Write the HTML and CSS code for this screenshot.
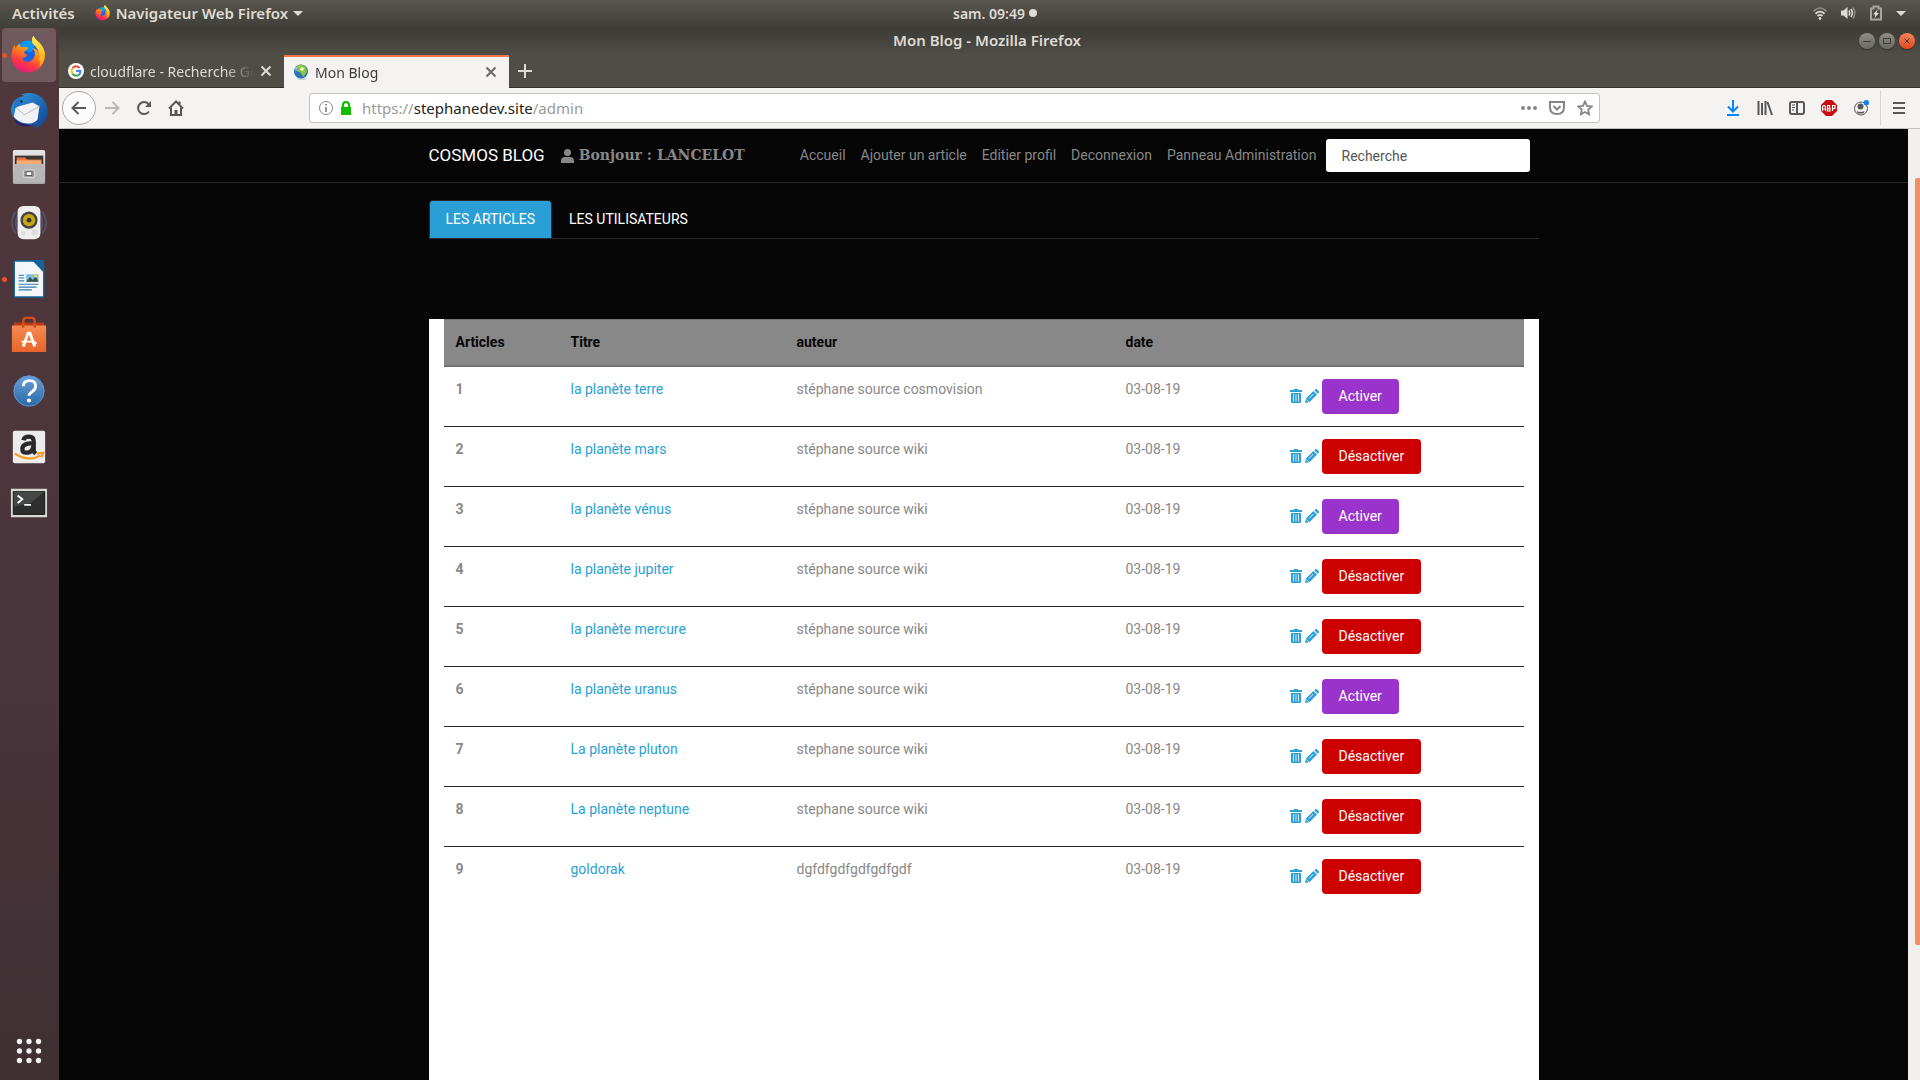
FILE: index.html
```html
<!DOCTYPE html>
<html lang="fr">
<head>
<meta charset="utf-8">
<title>Mon Blog</title>
<link rel="stylesheet" href="styles.css">
</head>
<body>
<svg class="sprite" aria-hidden="true">
  <defs>
    <linearGradient id="ff-body" x1="0.7" y1="0" x2="0.3" y2="1"><stop offset="0" stop-color="#ffd93a"/><stop offset="0.45" stop-color="#ff8a16"/><stop offset="0.75" stop-color="#ff3647"/><stop offset="1" stop-color="#e31587"/></linearGradient>
    <linearGradient id="ff-flame" x1="0" y1="0" x2="0" y2="1"><stop offset="0" stop-color="#fff14f"/><stop offset="1" stop-color="#ff980e"/></linearGradient>
    <linearGradient id="metal" x1="0" y1="0" x2="0" y2="1"><stop offset="0" stop-color="#e8e8e8"/><stop offset="1" stop-color="#a9a9a9"/></linearGradient>
    <linearGradient id="orange" x1="0" y1="0" x2="0" y2="1"><stop offset="0" stop-color="#f58a52"/><stop offset="1" stop-color="#e8652a"/></linearGradient>
    <linearGradient id="blue" x1="0" y1="0" x2="0" y2="1"><stop offset="0" stop-color="#6a9fd8"/><stop offset="1" stop-color="#2a6aa8"/></linearGradient>
    <linearGradient id="bird" x1="0" y1="0" x2="1" y2="1"><stop offset="0" stop-color="#2f9be6"/><stop offset="1" stop-color="#123f8c"/></linearGradient>
  </defs>
  <symbol id="firefox" viewBox="0 0 40 40">
    <circle cx="19" cy="19" r="14" fill="#1b63dc"/>
    <path d="M10 9c5-6 13-5 17-1l-5 9-9-2z" fill="#0a9bf0"/>
    <path d="M5 9c0 2 .4 3 1 4 1-3 3-4 4-5 0 2 1 3 2 4 3-1 6 0 7 0-.5 3-4 3-4 5 0 2 1 2 3 3-1 3-4 2-5 4 2 5 11 4 13-3 1-4-1-7-3-8 4 0 6 2 7 5 0-6-4-9-6-10-2-5 0-7 1-8 1 4 6 6 9 11 5 8 3 17-3 23-7 6-18 6-24 0C0 27 0 17 5 9z" fill="url(#ff-body)"/>
    <path d="M25 0c1 4 6 6 9 11 5 8 2 17-3 22 1-4 1-7-1-8 2-4 2-9-6-17-2-5 0-7 1-8z" fill="url(#ff-flame)"/>
  </symbol>
  <symbol id="trash" viewBox="0 0 12 14">
    <path fill="#2a9fd6" d="M0 1h4V0h4v1h4v2H0zM1 4h10v9q0 1-1 1H2q-1 0-1-1z"/>
    <path stroke="#fff" stroke-opacity="0.8" d="M3.500 5v7.500M6 5v7.500M8.500 5v7.500"/>
  </symbol>
  <symbol id="pencil" viewBox="0 0 14 14">
    <path fill="#2a9fd6" d="M1 9.500 8.500 2 12 5.500 4.500 13 0 14zM9.300 1.200 10.200.3q.8-.6 1.500 0l2 2q.6.700 0 1.500l-.9.900z"/>
    <path stroke="#fff" stroke-opacity="0.8" fill="none" d="M4 9.500 8.500 5M1.500 10.500 3.500 12.500"/>
  </symbol>
</svg>

<header class="topbar">
  <div class="topbar-left">
    <span>Activités</span>
    <span class="app-menu"><svg class="i16"><use href="#firefox"/></svg>Navigateur Web Firefox<i class="caret"></i></span>
  </div>
  <div class="clock">sam. 09:49<i class="dot"></i></div>
  <div class="tray">
    <svg class="i16" viewBox="0 0 16 16" fill="none" stroke="#dfdbd2" stroke-width="1.700"><path d="M1.500 6.500Q8-.5 14.500 6.500" stroke="#8c8a84"/><path d="M3.500 8.800q4.500-4.400 9 0M5.500 11q2.500-2.200 5 0"/><circle cx="8" cy="13.500" r="1.400" fill="#dfdbd2" stroke="none"/></svg>
    <svg class="i16" viewBox="0 0 16 16" fill="none" stroke="#dfdbd2" stroke-width="1.500"><path d="M1 5.500h2.500L7.500 2v12L3.500 10.500H1z" fill="#dfdbd2" stroke="none"/><path d="M9 5.500q1.500 2.500 0 5M11 4q2.500 4 0 8"/><path d="M13 2.500q3.500 5.500 0 11" stroke="#8c8a84"/></svg>
    <svg class="i16" viewBox="0 0 16 16"><path d="M3 3.500h2.500v-2h5v2H13v11H3z" fill="none" stroke="#a8a59e" stroke-width="2"/><path d="M9.500 4.500 5 9.500h2.300L6.500 13 11 8H8.700z" fill="#dfdbd2"/></svg>
    <i class="caret"></i>
  </div>
</header>

<div class="desktop">
  <nav class="dock" aria-label="Lanceur">
    <button class="launcher current running" aria-label="Firefox"><svg viewBox="0 0 40 40"><use href="#firefox"/></svg></button>
    <button class="launcher" aria-label="Thunderbird"><svg viewBox="0 0 40 40">
      <path d="M12 3C19-1 31 1 36 9c5 8 5 18-1 24-3 3-7 5-12 6l5-4C12 36 2 30 1 20 1 13 5 8 9 6l6-2z" fill="url(#bird)"/>
      <path d="M6 16 24 11l7 4-2 14q-4 5-12 4-8-1-13-7z" fill="#f2f2f4"/><path d="m6 16 9 8 16-9" fill="none" stroke="#b5b9c4"/><path d="M3 26q5 9 22 9-12 3-18-2z" fill="#27196b"/><path d="M9 6q4 3 3 7l-8 5Q3 11 9 6z" fill="#1f77c9"/><circle cx="12" cy="10" r="1.200" fill="#222"/></svg></button>
    <button class="launcher" aria-label="Fichiers"><svg viewBox="0 0 40 40">
      <rect x="3" y="2" width="34" height="36" rx="2" fill="url(#metal)"/><path d="M5 8h30v9H5z" fill="#3a3735"/><path d="M7 10h9l2 2h15v5H7z" fill="#e8703a"/><path d="M7 13h26v4H7z" fill="#f5ab74"/><path d="M4 17h32v19H4z" fill="#b7b7b7"/><rect x="14" y="23" width="12" height="8" rx="2" fill="#999" stroke="#ddd"/><rect x="17" y="25" width="6" height="4" fill="#fff" stroke="#555"/></svg></button>
    <button class="launcher" aria-label="Rhythmbox"><svg viewBox="0 0 40 40">
      <path d="M6 8q-8 12 0 23M9 10q-6 10 0 19M34 8q8 12 0 23M31 10q6 10 0 19" fill="none" stroke="#535069" stroke-width="2"/><rect x="8" y="2" width="24" height="35" rx="6" fill="#eee"/><circle cx="20" cy="17" r="9" fill="#454545"/><circle cx="20" cy="17" r="6.500" fill="#c7a70d"/><circle cx="20" cy="17" r="2.500" fill="#333"/><circle cx="14" cy="31" r="2.500" fill="#dedede"/><circle cx="26" cy="30" r="3.500" fill="#dedede"/></svg></button>
    <button class="launcher running" aria-label="LibreOffice Writer"><svg viewBox="0 0 40 40">
      <path d="M4.500 1H25l10.500 11v27h-31z" fill="#f5f6f7" stroke="#12659a" stroke-width="1.500"/><path d="M25 0h11v12z" fill="#11639a"/><path d="M17 15h13v8H17z" fill="#79bde8"/><path d="m17 23 4-5 3 3 3-4 3 6z" fill="#335443"/><circle cx="27" cy="17" r="1.500" fill="#ffd830"/><path d="M9 16h6M9 19h6M9 22h6M9 25.500h21M9 28.500h19M9 31.500h14" stroke="#2f7fb5" stroke-width="1.200"/></svg></button>
    <button class="launcher" aria-label="Logiciels Ubuntu"><svg viewBox="0 0 40 40">
      <path d="M4 7h32v6H4z" fill="#bb3b12"/><path d="M14 12V5q0-3 3-3h6q3 0 3 3v7" fill="none" stroke="#d94b1e" stroke-width="2.500"/><path d="M2 10h36v28H2z" fill="url(#orange)"/><path d="M14 12v-2M26 12v-2" stroke="#c43e12" stroke-width="2.500"/><path d="m14 32 5-14h2l5 14" fill="none" stroke="#fff" stroke-width="3"/><path d="M12 27h13l3 2" fill="none" stroke="#fff" stroke-width="2"/></svg></button>
    <button class="launcher" aria-label="Aide"><svg viewBox="0 0 40 40"><circle cx="20" cy="20" r="16" fill="url(#blue)" stroke="#5f97cf"/><path d="M14 15q0-6 6.500-6T27 15q0 3-3.500 5.500T20 25" fill="none" stroke="#fff" stroke-width="3"/><circle cx="20" cy="30" r="2.200" fill="#fff"/></svg></button>
    <button class="launcher" aria-label="Amazon"><svg viewBox="0 0 40 40"><rect x="3" y="3" width="34" height="34" rx="2" fill="#ececec"/><path d="M14 13q1-4 6-4t5 5v10q0 1 2 3M25 16q-12 0-12 6 0 4 4 4 8 0 8-10" fill="none" stroke="#292929" stroke-width="4.500"/><path d="M5 27q14 9 27 2M28 27l7-1-2 5" fill="none" stroke="#f79a1c" stroke-width="2.200"/></svg></button>
    <button class="launcher" aria-label="Terminal"><svg viewBox="0 0 40 40"><path d="M1 5h38v30H1z" fill="#d6d8d4"/><path d="M3.500 8h33v24h-33z" fill="#2d2f2e" stroke="#111"/><path d="M4 8h32L22 20 4 24z" fill="#454846"/><path d="m8 12 5 4-5 4M15 22h7" fill="none" stroke="#fff" stroke-width="2"/></svg></button>
    <button class="launcher apps" aria-label="Afficher les applications"><svg viewBox="0 0 40 40" fill="#f2f2f2"><circle cx="10" cy="10" r="2.800"/><circle cx="20" cy="10" r="2.800"/><circle cx="30" cy="10" r="2.800"/><circle cx="10" cy="20" r="2.800"/><circle cx="20" cy="20" r="2.800"/><circle cx="30" cy="20" r="2.800"/><circle cx="10" cy="30" r="2.800"/><circle cx="20" cy="30" r="2.800"/><circle cx="30" cy="30" r="2.800"/></svg></button>
  </nav>

  <section class="window">
    <div class="titlebar">
      <span class="window-title">Mon Blog - Mozilla Firefox</span>
      <div class="controls">
        <button class="control" aria-label="Réduire"><svg viewBox="0 0 16 16"><path d="M4 8.500h8"/></svg></button>
        <button class="control" aria-label="Agrandir"><svg viewBox="0 0 16 16"><path d="M4.500 5.500h7v5h-7z"/></svg></button>
        <button class="control close" aria-label="Fermer"><svg viewBox="0 0 16 16"><path d="m5.500 5.500 5 5M10.500 5.500l-5 5"/></svg></button>
      </div>
    </div>
    <div class="tabs">
      <div class="tab">
        <svg class="i16" viewBox="0 0 16 16"><circle cx="8" cy="8" r="8" fill="#fff"/><g fill="none" stroke-width="2"><path d="M11.500 5Q8 1.500 4.500 5" stroke="#ea4335"/><path d="M4.500 5q-1.600 3 0 6" stroke="#fbbc05"/><path d="M4.500 11q3 3 6.500.8" stroke="#34a853"/><path d="M8 8h4.500q0 2.500-1.800 4" stroke="#4285f4"/></g></svg>
        <span class="tab-label">cloudflare - Recherche Go</span>
        <button class="tab-close" aria-label="Fermer l'onglet"><svg viewBox="0 0 12 12"><path d="m1.500 1.500 9 9M10.500 1.500l-9 9"/></svg></button>
      </div>
      <div class="tab active">
        <svg class="i16" viewBox="0 0 16 16"><ellipse cx="9" cy="15" rx="5" ry="1" fill="#c5d5e0"/><circle cx="8" cy="7.500" r="7" fill="#2c72b8"/><path d="M5 1q5-1 8 2l1 5-4 5-2-4-4-2z" fill="#8dc63f"/><path d="M8 3l3 1-1 3-3-1z" fill="#f0f6c8"/><path d="M2 4q2-2 3-2L3 8z" fill="#8fd0f5"/></svg>
        <span class="tab-label">Mon Blog</span>
        <button class="tab-close" aria-label="Fermer l'onglet"><svg viewBox="0 0 12 12"><path d="m1.500 1.500 9 9M10.500 1.500l-9 9"/></svg></button>
      </div>
      <button class="new-tab" aria-label="Nouvel onglet"><svg viewBox="0 0 14 14"><path d="M7 0v14M0 7h14"/></svg></button>
    </div>
    <div class="toolbar">
      <button class="tool back" aria-label="Précédent"><svg viewBox="0 0 16 16"><path d="M15 8H1.500M7.500 2l-6 6 6 6"/></svg></button>
      <button class="tool faded" aria-label="Suivant"><svg viewBox="0 0 16 16"><path d="M1 8h13.500M8.500 2l6 6-6 6"/></svg></button>
      <button class="tool" aria-label="Actualiser"><svg viewBox="0 0 16 16"><path d="M13 11.500A6 6 0 1 1 12.500 4"/><path d="M15 1v6H9z" fill="#58595b" stroke="none"/></svg></button>
      <button class="tool" aria-label="Accueil"><svg viewBox="0 0 16 16"><path d="m1 8.500 7-7 7 7M3 7.500V15h10V7.500M11.500 4V1.500"/><path d="M6.500 15v-5h3v5z" fill="#58595b" stroke="none"/></svg></button>
      <form class="url">
        <svg class="i16" viewBox="0 0 16 16" fill="none" stroke="#858585"><circle cx="8" cy="8" r="6.500"/><path d="M8 7v5M8 4v1.500" stroke-width="1.700"/></svg>
        <svg class="i16" viewBox="0 0 16 16"><path d="M3 7h10v8H3z" fill="#12bc00"/><path d="M5 8V5q0-3 3-3t3 3v3" fill="none" stroke="#12bc00" stroke-width="2.200"/></svg>
        <div class="address" role="textbox" aria-label="Adresse">https://<b>stephanedev.site</b>/admin</div>
        <div class="url-actions">
          <svg class="i16" viewBox="0 0 16 16" fill="#858585"><circle cx="2" cy="8" r="2"/><circle cx="8" cy="8" r="2"/><circle cx="14" cy="8" r="2"/></svg>
          <svg class="i16" viewBox="0 0 16 16" fill="none" stroke="#858585" stroke-width="2"><path d="M1 2h14v5q0 7-7 7T1 7z"/><path d="m4.500 6 3.500 3.500L11.500 6"/></svg>
          <svg class="i16" viewBox="0 0 16 16" fill="none" stroke="#858585" stroke-width="1.800"><path d="m8 1.500 2 4.300 4.700.6-3.500 3.200.9 4.700L8 12l-4.100 2.300.9-4.700L1.300 6.400 6 5.800z"/></svg>
        </div>
      </form>
      <div class="tools-right">
        <button class="tool" aria-label="Téléchargements"><svg viewBox="0 0 16 16" class="download"><path d="M8 0v11M3 6.500l5 5 5-5M2 15h12"/></svg></button>
        <button class="tool" aria-label="Bibliothèque"><svg viewBox="0 0 16 16"><path d="M1.500 1v14M5 3v12M8.500 1v14M10.500 2 15 15"/></svg></button>
        <button class="tool" aria-label="Panneaux"><svg viewBox="0 0 16 16"><rect x="1" y="2" width="14" height="12" rx="2"/><path d="M8 2v12"/><path d="M3 5h3M3 7.500h3M3 10h2" stroke-width="1"/></svg></button>
        <button class="tool" aria-label="Adblock Plus"><svg viewBox="0 0 16 16"><path d="M5 0h6l5 5v6l-5 5H5l-5-5V5z" fill="#c70d0d" stroke="none"/><path d="M1.500 11V7l1-1.500h1L4.500 7v4M1.500 9h3M6.500 5v6h2.500V8.500H6.500M6.500 5.500h2v2.500M11.500 11V5.500H14v3h-2.500" stroke="#fff" stroke-width="1.200"/></svg></button>
        <button class="tool" aria-label="Compte"><svg viewBox="0 0 16 16"><circle cx="8" cy="8.500" r="6.500" stroke-width="1"/><circle cx="7.500" cy="6.500" r="3" fill="#58595b" stroke="none"/><path d="M3.500 11q4 2 8 0l-1 2.500H5z" fill="#58595b" stroke="none"/><circle cx="13.300" cy="2.700" r="2.700" fill="#0a84ff" stroke="none"/></svg></button>
      </div>
      <button class="tool menu" aria-label="Menu"><svg viewBox="0 0 16 16"><path d="M2 3h12M2 8h12M2 13h12"/></svg></button>
    </div>

    <div class="viewport">
      <main class="site">
        <div class="navbar">
          <div class="container nav-row">
            <a class="brand" href="#">COSMOS BLOG</a>
            <span class="hello"><svg viewBox="0 0 13 14"><circle cx="6.500" cy="3.500" r="3.500"/><path d="M0 14v-2q0-4 4-4h5q4 0 4 4v2z"/></svg>Bonjour : LANCELOT</span>
            <nav class="links">
              <a href="#">Accueil</a>
              <a href="#">Ajouter un article</a>
              <a href="#">Editier profil</a>
              <a href="#">Deconnexion</a>
              <a href="#">Panneau Administration</a>
            </nav>
            <input class="search" type="text" placeholder="Recherche" aria-label="Recherche">
          </div>
        </div>
        <div class="container sections">
          <a class="section active" href="#">LES ARTICLES</a>
          <a class="section" href="#">LES UTILISATEURS</a>
        </div>
        <div class="container panel">
          <table class="articles">
            <colgroup><col class="c-num"><col class="c-title"><col class="c-author"><col class="c-date"><col></colgroup>
            <thead><tr><th>Articles</th><th>Titre</th><th>auteur</th><th>date</th><th></th></tr></thead>
            <tbody>
              <tr><th>1</th><td><a href="#">la planète terre</a></td><td>stéphane source cosmovision</td><td>03-08-19</td><td><div class="actions"><a href="#" aria-label="Supprimer"><svg class="trash"><use href="#trash"/></svg></a><a href="#" aria-label="Modifier"><svg class="pencil"><use href="#pencil"/></svg></a><button class="btn on">Activer</button></div></td></tr>
              <tr><th>2</th><td><a href="#">la planète mars</a></td><td>stéphane source wiki</td><td>03-08-19</td><td><div class="actions"><a href="#" aria-label="Supprimer"><svg class="trash"><use href="#trash"/></svg></a><a href="#" aria-label="Modifier"><svg class="pencil"><use href="#pencil"/></svg></a><button class="btn off">Désactiver</button></div></td></tr>
              <tr><th>3</th><td><a href="#">la planète vénus</a></td><td>stéphane source wiki</td><td>03-08-19</td><td><div class="actions"><a href="#" aria-label="Supprimer"><svg class="trash"><use href="#trash"/></svg></a><a href="#" aria-label="Modifier"><svg class="pencil"><use href="#pencil"/></svg></a><button class="btn on">Activer</button></div></td></tr>
              <tr><th>4</th><td><a href="#">la planète jupiter</a></td><td>stéphane source wiki</td><td>03-08-19</td><td><div class="actions"><a href="#" aria-label="Supprimer"><svg class="trash"><use href="#trash"/></svg></a><a href="#" aria-label="Modifier"><svg class="pencil"><use href="#pencil"/></svg></a><button class="btn off">Désactiver</button></div></td></tr>
              <tr><th>5</th><td><a href="#">la planète mercure</a></td><td>stéphane source wiki</td><td>03-08-19</td><td><div class="actions"><a href="#" aria-label="Supprimer"><svg class="trash"><use href="#trash"/></svg></a><a href="#" aria-label="Modifier"><svg class="pencil"><use href="#pencil"/></svg></a><button class="btn off">Désactiver</button></div></td></tr>
              <tr><th>6</th><td><a href="#">la planète uranus</a></td><td>stéphane source wiki</td><td>03-08-19</td><td><div class="actions"><a href="#" aria-label="Supprimer"><svg class="trash"><use href="#trash"/></svg></a><a href="#" aria-label="Modifier"><svg class="pencil"><use href="#pencil"/></svg></a><button class="btn on">Activer</button></div></td></tr>
              <tr><th>7</th><td><a href="#">La planète pluton</a></td><td>stephane source wiki</td><td>03-08-19</td><td><div class="actions"><a href="#" aria-label="Supprimer"><svg class="trash"><use href="#trash"/></svg></a><a href="#" aria-label="Modifier"><svg class="pencil"><use href="#pencil"/></svg></a><button class="btn off">Désactiver</button></div></td></tr>
              <tr><th>8</th><td><a href="#">La planète neptune</a></td><td>stephane source wiki</td><td>03-08-19</td><td><div class="actions"><a href="#" aria-label="Supprimer"><svg class="trash"><use href="#trash"/></svg></a><a href="#" aria-label="Modifier"><svg class="pencil"><use href="#pencil"/></svg></a><button class="btn off">Désactiver</button></div></td></tr>
              <tr><th>9</th><td><a href="#">goldorak</a></td><td>dgfdfgdfgdfgdfgdf</td><td>03-08-19</td><td><div class="actions"><a href="#" aria-label="Supprimer"><svg class="trash"><use href="#trash"/></svg></a><a href="#" aria-label="Modifier"><svg class="pencil"><use href="#pencil"/></svg></a><button class="btn off">Désactiver</button></div></td></tr>
            </tbody>
          </table>
        </div>
      </main>
      <div class="scrollbar"><div class="thumb"></div></div>
    </div>
  </section>
</div>
</body>
</html>
```
FILE: styles.css
```css
* { box-sizing: border-box; }

body {
  margin: 0;
  height: 100vh;
  display: flex;
  flex-direction: column;
  overflow: hidden;
  font: 14px/21px "Noto Sans", "Open Sans", sans-serif;
}

button { padding: 0; border: 0; background: none; font: inherit; color: inherit; }
a { color: #2a9fd6; text-decoration: none; }
svg { display: block; flex: none; }
.sprite { width: 0; height: 0; position: absolute; }
.i16 { width: 16px; height: 16px; }

/* Desktop top bar */
.topbar {
  flex: none;
  height: 28px;
  display: grid;
  grid-template-columns: 1fr auto 1fr;
  align-items: center;
  padding: 0 14px 2px 12px;
  background: linear-gradient(#59564e, #3f3e39);
  color: #dfdbd2;
  font-size: 15px;
  font-weight: 600;
}
.topbar-left { display: flex; gap: 20px; }
.app-menu { display: flex; align-items: center; gap: 5px; }
.caret { border: 5px solid transparent; border-top-color: #dfdbd2; border-bottom: 0; }
.clock { display: flex; align-items: center; gap: 4px; padding-left: 72px; font-size: 14px; }
.dot { width: 8px; height: 8px; border-radius: 50%; background: #dfdbd2; }
.tray { display: flex; align-items: center; justify-content: flex-end; gap: 12px; }

.desktop { flex: 1; min-height: 0; display: flex; }

/* Launcher */
.dock {
  flex: none;
  width: 59px;
  display: flex;
  flex-direction: column;
  gap: 2px;
  padding: 0 2px 2px;
  background: linear-gradient(#50373b, #4b353c 50%, #3f3034);
}
.launcher {
  flex: none;
  width: 54px;
  height: 54px;
  display: flex;
  align-items: center;
  justify-content: center;
  position: relative;
  border-radius: 4px;
}
.launcher svg { width: 38px; height: 38px; }
.launcher.current { background: #70595d; }
.launcher.running::before {
  content: "";
  position: absolute;
  left: 0;
  top: 25px;
  width: 5px;
  height: 5px;
  border-radius: 50%;
  background: #e95420;
}
.launcher.apps { margin-top: auto; }

/* Browser window */
.window { flex: 1; min-width: 0; display: flex; flex-direction: column; }
.titlebar {
  flex: none;
  height: 27px;
  display: grid;
  grid-template-columns: 1fr auto 1fr;
  align-items: center;
  padding: 0 5px 2px 0;
  background: linear-gradient(#3c3b37, #504d46);
  color: #dfdbd2;
  font-size: 15px;
  font-weight: 600;
}
.window-title { grid-column: 2; }
.controls { display: flex; justify-content: flex-end; gap: 4px; }
.control { width: 16px; height: 16px; border-radius: 50%; background: linear-gradient(#8f8d86, #6a6862); box-shadow: 0 1px 1px #33312d; }
.control.close { background: linear-gradient(#f5835d, #df4a16); }
.control svg { fill: none; stroke: #3c3b37; }

.tabs { flex: none; height: 33px; display: flex; background: #504d46; color: #dfdbd2; box-shadow: inset 0 -1px #33322e; }
.tab { width: 225px; display: flex; align-items: center; gap: 6px; padding: 0 12px 1px 9px; }
.tab.active { background: #f4f3f2; color: #3c3c3c; border-top: 2px solid #f07746; }
.tab-label {
  flex: 1;
  min-width: 0;
  overflow: hidden;
  white-space: nowrap;
  mask-image: linear-gradient(to right, #000 82%, transparent);
}
.tab-close svg { width: 12px; height: 12px; fill: none; stroke: currentColor; stroke-width: 2; }
.tab.active .tab-close { color: #6a6a6a; }
.new-tab { padding: 0 9px 2px; }
.new-tab svg { width: 14px; height: 14px; fill: none; stroke: #dfdbd2; stroke-width: 2; }

.toolbar {
  flex: none;
  height: 41px;
  display: flex;
  align-items: center;
  padding: 0 3px;
  background: #f4f3f2;
  border-bottom: 1px solid #c3c1be;
}
.tool { width: 32px; height: 32px; display: flex; align-items: center; justify-content: center; }
.tool svg { width: 16px; height: 16px; fill: none; stroke: #58595b; stroke-width: 2; }
.tool.faded svg { stroke: #b9b8b7; }
.tool.back { width: 34px; height: 34px; border: 1px solid #a8a8a8; border-radius: 50%; background: #fcfcfc; }
.tool .download { stroke: #0a84ff; }
.url {
  flex: 1;
  min-width: 0;
  height: 30px;
  display: flex;
  align-items: center;
  gap: 4px;
  margin: 0 117px;
  padding: 0 6px 0 8px;
  border: 1px solid #c4c3c2;
  border-radius: 3px;
  background: #fff;
  color: #999;
}
.address { flex: 1; min-width: 0; padding-left: 4px; font-size: 15px; white-space: nowrap; }
.address b { font-weight: 400; color: #222; }
.url-actions { display: flex; gap: 12px; }
.tools-right { display: flex; padding-right: 3px; }
.tool.menu { width: 37px; height: 34px; border-left: 1px solid #d4d3d2; }

.viewport { flex: 1; min-height: 0; display: flex; background: #060606; }
.scrollbar { flex: none; width: 12px; padding: 49px 0 0 7px; background: #f1f0ef; }
.thumb { height: 85%; background: #f28e68; border-radius: 2px 0 0 2px; }

/* Blog administration page */
.site {
  flex: 1;
  min-width: 0;
  display: flex;
  flex-direction: column;
  background: #060606;
  color: #888;
  font-family: Roboto, sans-serif;
}
.container { width: 100%; max-width: 1110px; margin: 0 auto; }
.navbar { padding: 10px 0; border-bottom: 1px solid #282828; }
.nav-row { display: flex; align-items: center; padding-right: 9px; }
.brand { font-size: 17px; color: #fff; margin-right: 16px; }
.hello { display: flex; align-items: center; gap: 5px; font: 700 14px/21px "DejaVu Serif", serif; white-space: nowrap; }
.hello svg { width: 13px; height: 14px; fill: #888; }
.links { margin-left: auto; display: flex; gap: 15px; padding-right: 9px; white-space: nowrap; }
.links a { color: #888; }
.search {
  width: 204px;
  height: 33px;
  padding: 0 16px;
  border: 0;
  border-radius: 3px;
  background: #fff;
  color: #555;
  font: inherit;
}
.search::placeholder { color: #555; opacity: 1; }

.sections { display: flex; margin-top: 17px; border-bottom: 1px solid #282828; }
.section { padding: 8px 16px 7px; color: #fff; border: 1px solid transparent; border-radius: 4px 4px 0 0; }
.section.active { background: #2a9fd6; border-color: #282828; border-bottom-color: #2a9fd6; }

.panel { flex: 1; margin-top: 80px; padding: 0 15px; background: #fff; }
.articles { width: 100%; table-layout: fixed; border-collapse: separate; border-spacing: 0; }
.articles th, .articles td { padding: 12px; text-align: left; vertical-align: top; border-top: 1px solid #282828; }
.articles tbody tr:first-child > * { border-top: 0; }
.articles thead th { background: #888; color: #060606; border-top: 1px solid #747474; border-bottom: 2px solid #747474; }
.c-num { width: 115px; }
.c-title { width: 226px; }
.c-author { width: 329px; }
.c-date { width: 164px; }
.actions { display: flex; align-items: center; gap: 3px; }
.actions a { padding-bottom: 2px; }
.trash { width: 12px; height: 14px; }
.pencil { width: 14px; height: 14px; }
.btn { height: 35px; padding: 0 17px; border-radius: 4px; color: #fff; }
.btn.on { background: #9933cc; }
.btn.off { background: #cc0000; }
```
